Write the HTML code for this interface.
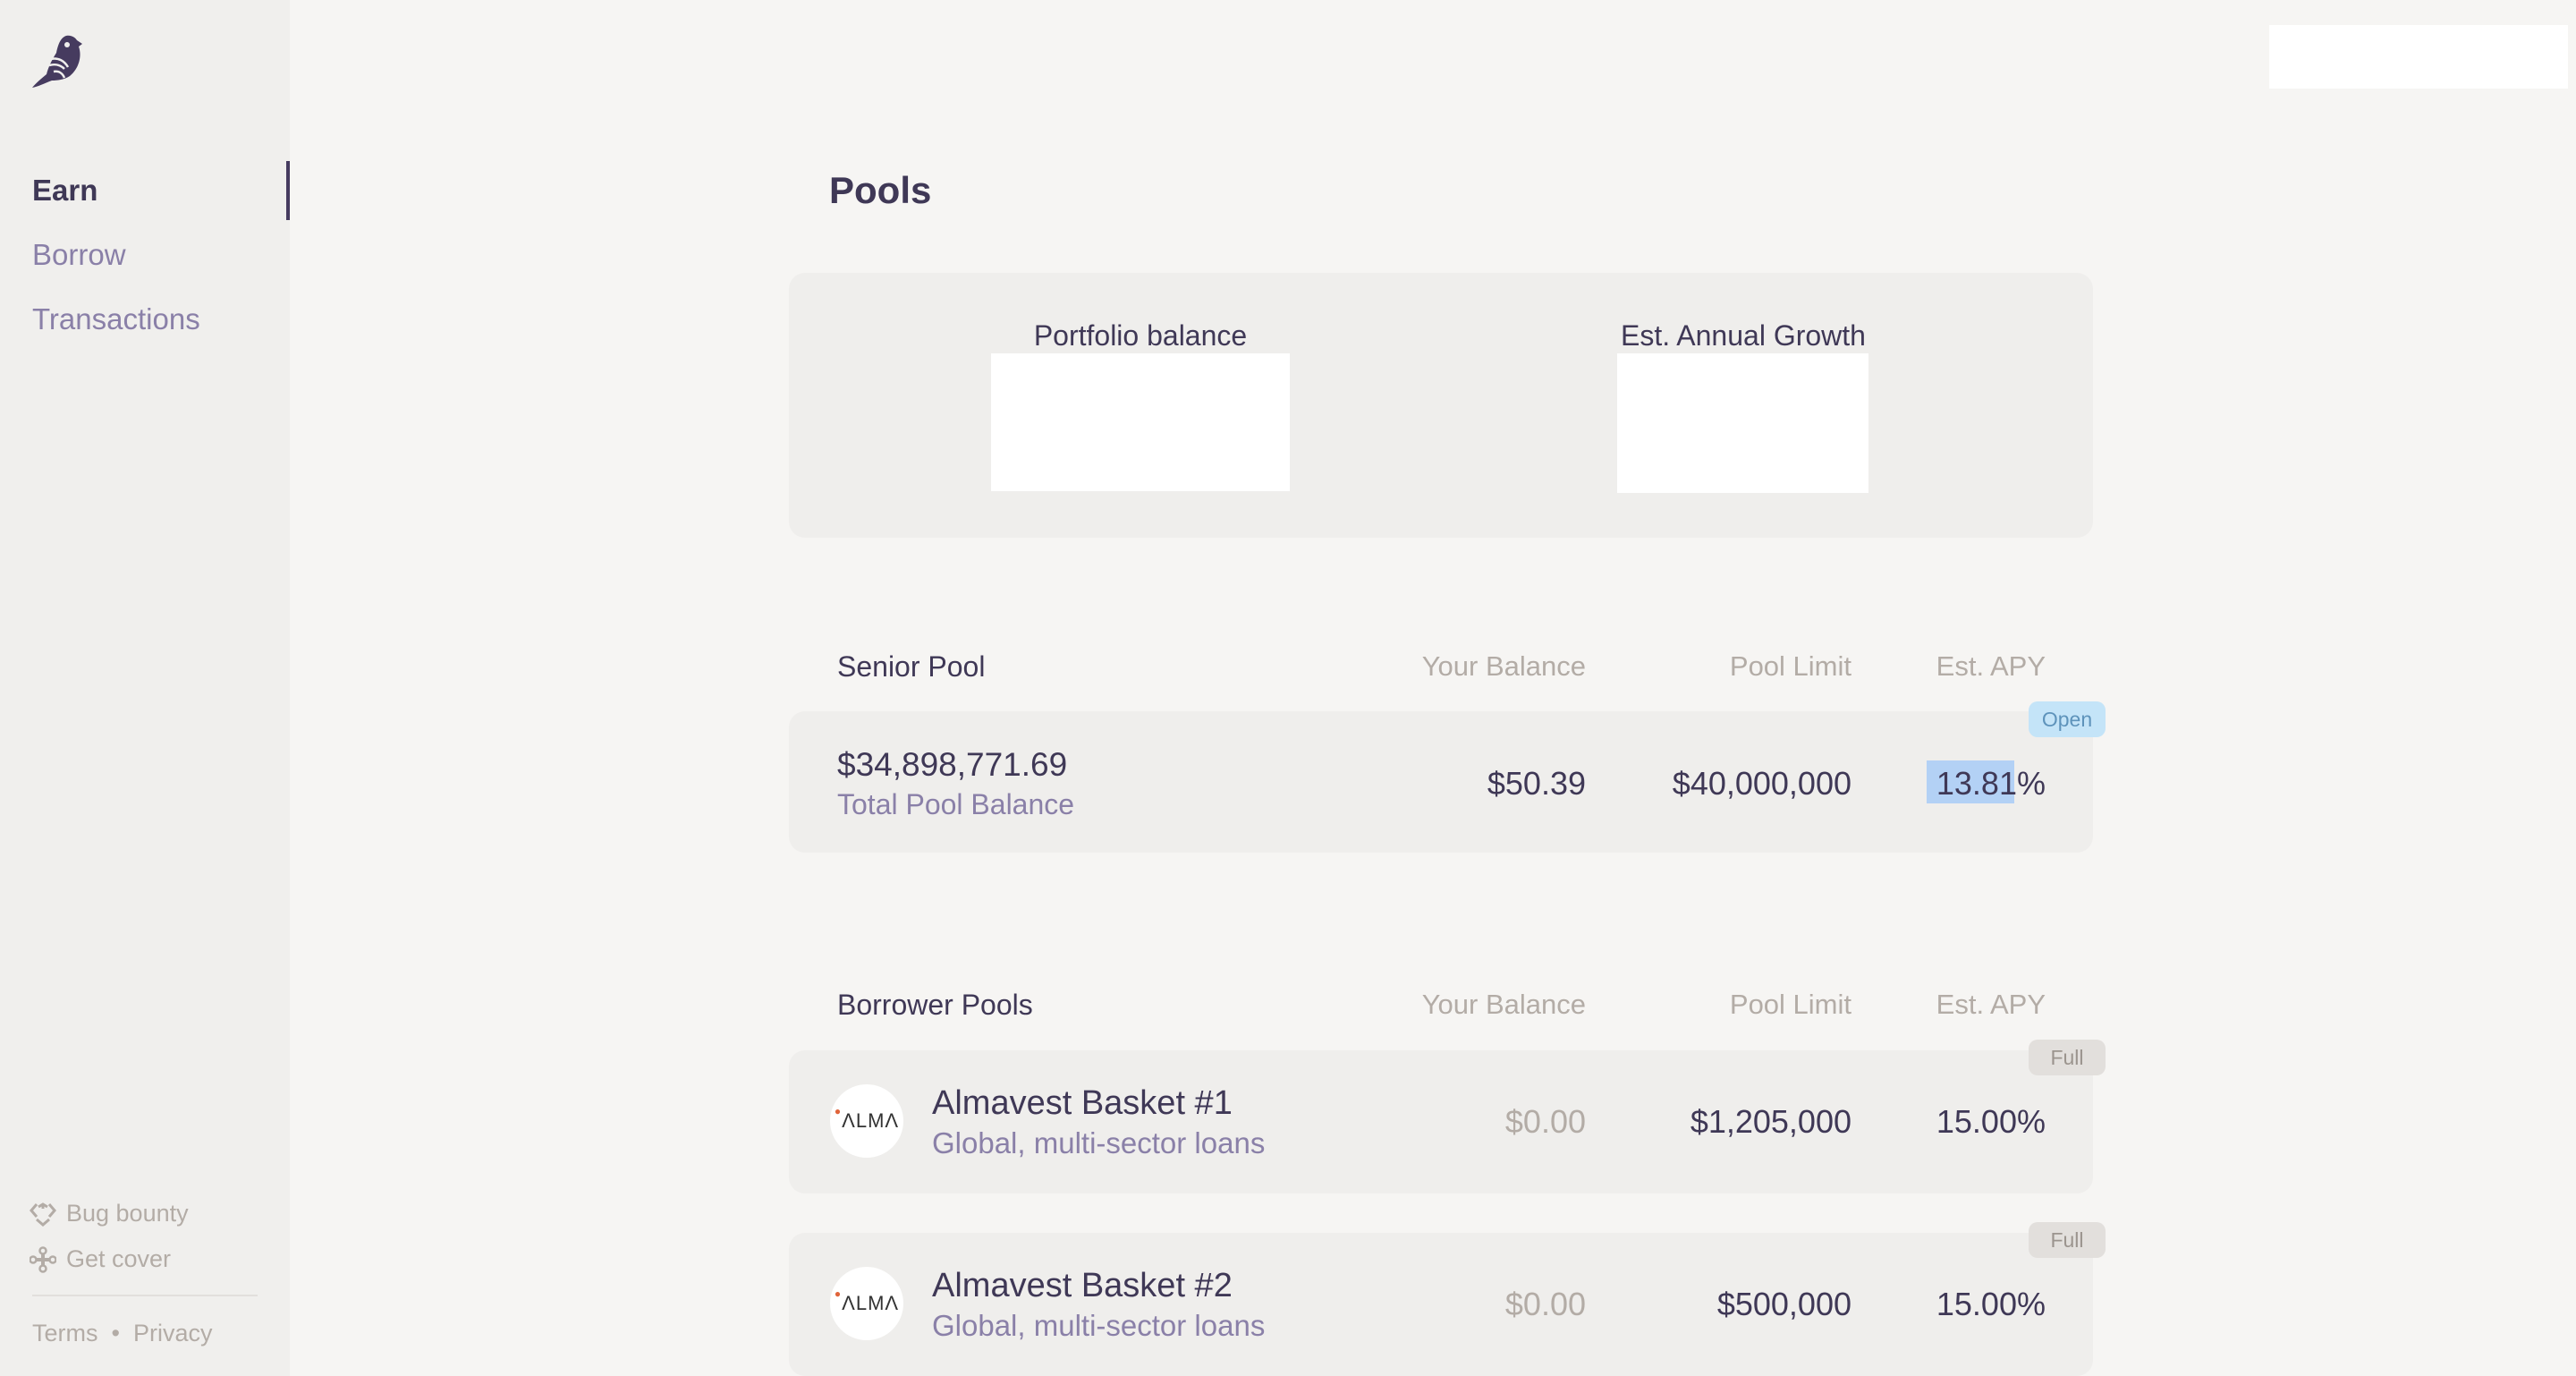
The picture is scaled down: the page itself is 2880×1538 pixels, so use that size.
<!DOCTYPE html>
<html><head><meta charset="utf-8"><style>
*{margin:0;padding:0;box-sizing:border-box}
body{width:2880px;height:1538px;background:#f6f5f3;font-family:"Liberation Sans",sans-serif;position:relative;overflow:hidden;color:#3f3856}
.a{position:absolute;white-space:nowrap}
.side{position:absolute;left:0;top:0;width:324px;height:1538px;background:#f0efed}
.card{position:absolute;left:882px;width:1458px;background:#efeeec;border-radius:18px}
.hd{font-size:31px;color:#b3aca6;text-align:right}
.v{font-size:36px;text-align:right}
.badge{position:absolute;left:2268px;width:86px;height:40px;border-radius:10px;font-size:23px;text-align:center;line-height:40px}
.sub{color:#8a80a8}
</style></head><body>
<div class="side"></div>
<svg class="a" style="left:30px;top:35px" width="70" height="70" viewBox="0 0 70 70">
<path d="M44 5 C50 4 54 7 56 10 L62 14 L58 17 C62 28 58 42 48 50 C42 54 34 55 28 55 C20 58 12 62 6 63 C10 58 16 53 22 48 C24 40 28 32 33 24 C35 14 38 7 44 5 Z" fill="#463b5f"/>
<circle cx="45" cy="15" r="3" fill="#f0efed"/>
<path d="M25 38 C32 36 38 38 42 42 M27 31 C35 29 42 33 46 40 M30 45 C36 44 40 47 42 52" stroke="#f0efed" stroke-width="2.5" fill="none"/>
</svg>
<div class="a" style="left:36px;top:194px;font-size:33px;font-weight:bold;color:#3f3856">Earn</div>
<div class="a" style="left:320px;top:180px;width:4px;height:66px;background:#463b5f"></div>
<div class="a" style="left:36px;top:266px;font-size:33px;color:#8a80a8">Borrow</div>
<div class="a" style="left:36px;top:338px;font-size:33px;color:#8a80a8">Transactions</div>
<svg class="a" style="left:33px;top:1343px" width="30" height="28" viewBox="0 0 30 28" fill="none" stroke="#b3aca6" stroke-width="3"><path d="M8 3 L2 10 L8 17 M22 3 L28 10 L22 17 M10 6 L15 3 L20 6 M8 20 L15 26 L22 20 M15 3 V8"/></svg>
<div class="a" style="left:74px;top:1341px;font-size:27px;color:#b3aca6">Bug bounty</div>
<svg class="a" style="left:33px;top:1393px" width="30" height="30" viewBox="0 0 30 30" fill="none" stroke="#b3aca6" stroke-width="2.5"><circle cx="15" cy="5" r="3.5"/><circle cx="15" cy="25" r="3.5"/><circle cx="4" cy="15" r="3.5"/><circle cx="26" cy="15" r="3.5"/><path d="M15 9 V21 M8 15 H22" stroke-width="4"/></svg>
<div class="a" style="left:74px;top:1392px;font-size:27px;color:#b3aca6">Get cover</div>
<div class="a" style="left:36px;top:1447px;width:252px;height:2px;background:#e2dfdc"></div>
<div class="a" style="left:36px;top:1475px;font-size:27px;color:#b3aca6">Terms &nbsp;•&nbsp; Privacy</div>
<div class="a" style="left:2537px;top:28px;width:334px;height:71px;background:#fff"></div>
<div class="a" style="left:927px;top:189px;font-size:42px;font-weight:bold;color:#3f3856">Pools</div>
<div class="card" style="top:305px;height:296px"></div>
<div class="a" style="left:1108px;top:357px;width:334px;text-align:center;font-size:32px">Portfolio balance</div>
<div class="a" style="left:1108px;top:395px;width:334px;height:154px;background:#fff"></div>
<div class="a" style="left:1749px;top:357px;width:400px;text-align:center;font-size:32px">Est. Annual Growth</div>
<div class="a" style="left:1808px;top:395px;width:281px;height:156px;background:#fff"></div>

<div class="a" style="left:936px;top:727px;font-size:32px">Senior Pool</div>
<div class="a hd" style="right:1107px;top:727px">Your Balance</div>
<div class="a hd" style="right:810px;top:727px">Pool Limit</div>
<div class="a hd" style="right:593px;top:727px">Est. APY</div>
<div class="card" style="top:795px;height:158px"></div>
<div class="a" style="left:936px;top:834px;font-size:37px">$34,898,771.69</div>
<div class="a sub" style="left:936px;top:881px;font-size:32px">Total Pool Balance</div>
<div class="a v" style="right:1107px;top:855px">$50.39</div>
<div class="a v" style="right:810px;top:855px">$40,000,000</div>
<div class="a" style="left:2154px;top:850px;width:98px;height:48px;background:#b3d1f5"></div>
<div class="a v" style="right:593px;top:855px">13.81%</div>
<div class="badge" style="top:784px;background:#c4e4f8;color:#5e93bb">Open</div>

<div class="a" style="left:936px;top:1105px;font-size:32px">Borrower Pools</div>
<div class="a hd" style="right:1107px;top:1105px">Your Balance</div>
<div class="a hd" style="right:810px;top:1105px">Pool Limit</div>
<div class="a hd" style="right:593px;top:1105px">Est. APY</div>

<div class="card" style="top:1174px;height:160px"></div>
<div class="a" style="left:928px;top:1212px;width:82px;height:82px;border-radius:50%;background:#fff;font-size:22px;line-height:82px;text-align:center;color:#333;letter-spacing:1px"><span style="color:#e0643a;font-size:12px;vertical-align:top;line-height:60px">●</span>ΛLMΛ</div>
<div class="a" style="left:1042px;top:1212px;font-size:38px">Almavest Basket #1</div>
<div class="a sub" style="left:1042px;top:1259px;font-size:33px">Global, multi-sector loans</div>
<div class="a v" style="right:1107px;top:1233px;color:#b3aca6">$0.00</div>
<div class="a v" style="right:810px;top:1233px">$1,205,000</div>
<div class="a v" style="right:593px;top:1233px">15.00%</div>
<div class="badge" style="top:1162px;background:#e2dfdc;color:#9b948e">Full</div>

<div class="card" style="top:1378px;height:160px"></div>
<div class="a" style="left:928px;top:1416px;width:82px;height:82px;border-radius:50%;background:#fff;font-size:22px;line-height:82px;text-align:center;color:#333;letter-spacing:1px"><span style="color:#e0643a;font-size:12px;vertical-align:top;line-height:60px">●</span>ΛLMΛ</div>
<div class="a" style="left:1042px;top:1416px;font-size:38px">Almavest Basket #2</div>
<div class="a sub" style="left:1042px;top:1463px;font-size:33px">Global, multi-sector loans</div>
<div class="a v" style="right:1107px;top:1437px;color:#b3aca6">$0.00</div>
<div class="a v" style="right:810px;top:1437px">$500,000</div>
<div class="a v" style="right:593px;top:1437px">15.00%</div>
<div class="badge" style="top:1366px;background:#e2dfdc;color:#9b948e">Full</div>
</body></html>
